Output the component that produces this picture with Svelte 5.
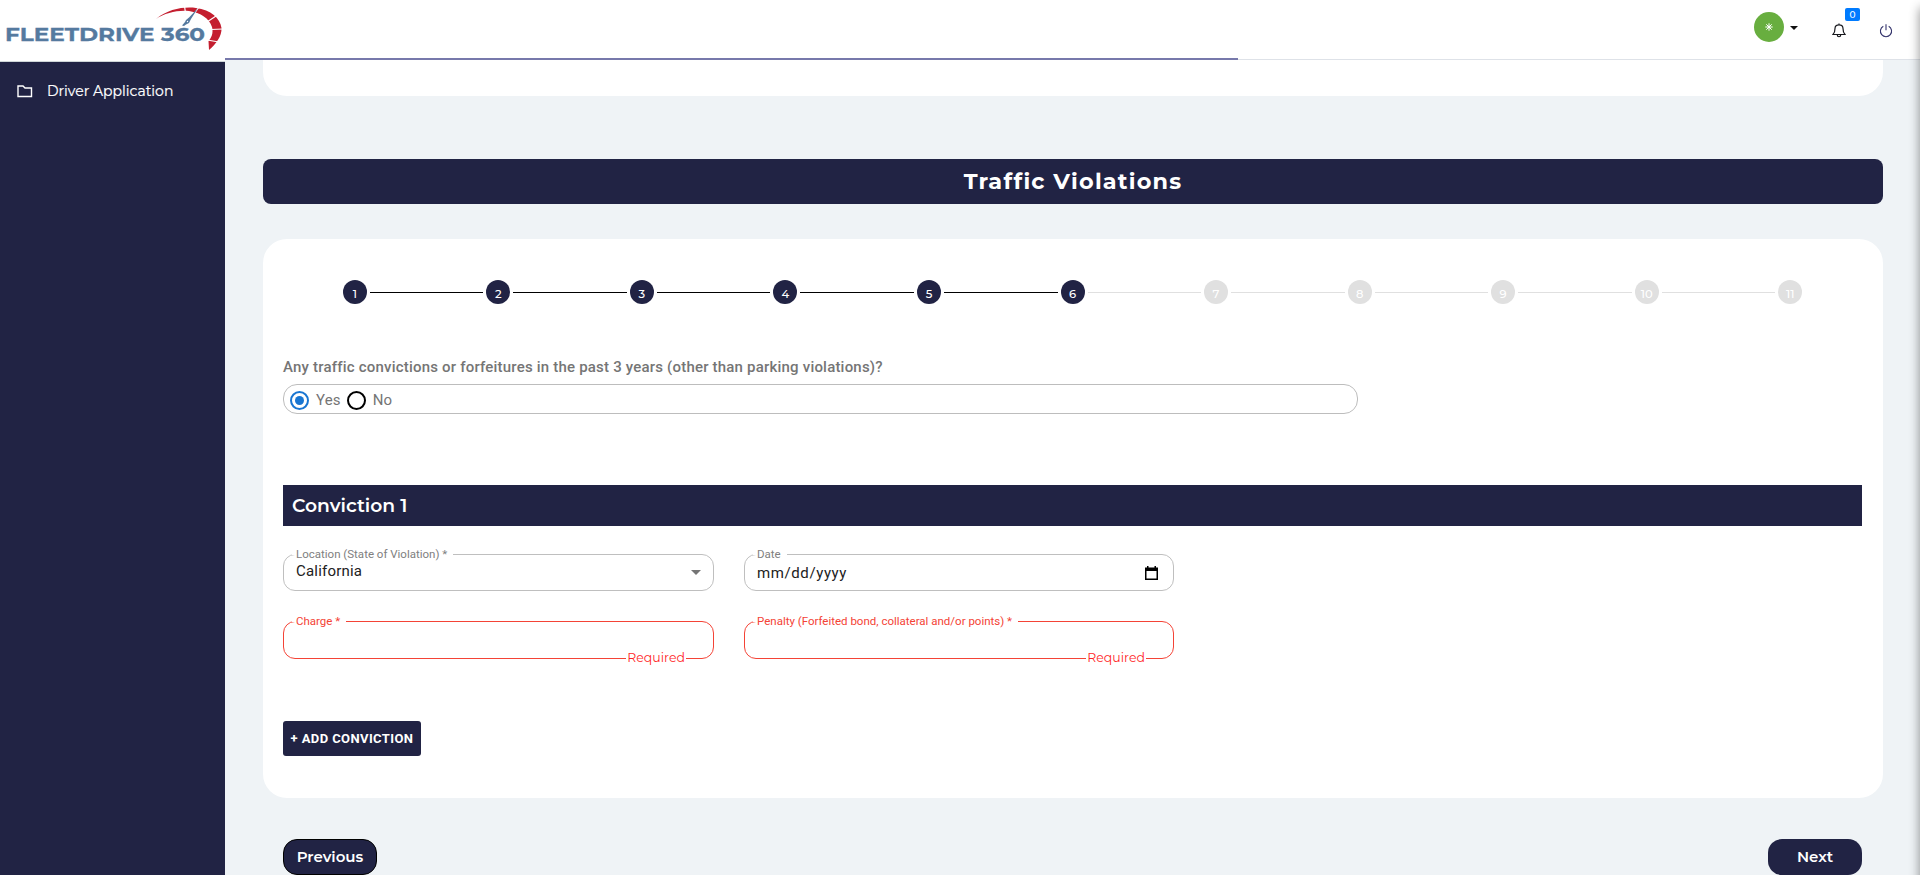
<script>
  const steps = Array.from({ length: 11 }, (_, i) => i + 1);
  const current = 6;
  let answer = $state('Yes');
</script>

<div class="page">
  <aside>
    <div class="brand">
      <svg width="225" height="61" viewBox="0 0 225 61">
        <text x="5" y="41" textLength="200" lengthAdjust="spacingAndGlyphs" class="logo">FLEETDRIVE 360</text>
        <path d="M156 19C168 9 184 6.500 196 8C211 10 220 18 221.500 28C222 36 216 44 209 50L208.500 41C213 36 213 31 212 27C209 18 201 13 189 11C177 10 165 13 156 19Z" fill="#c41e2f" />
        <path d="M184.500 6L185.500 13M199 7L194 14M216 16L207 22M223 29L211 29.500M219 42L207 40" stroke="#fff" stroke-width="1.200" />
        <path d="M198 8L191 19L189 23L186 24.500L184 26L182 25.500L185 22L186 20L189 17.500Z" fill="#557a9f" />
        <circle cx="187.500" cy="21.500" r=".7" fill="#fff" />
      </svg>
    </div>
    <nav>
      <svg width="16" height="13" viewBox="0 0 16 13" fill="none" stroke="#fff" stroke-width="1.400"><path d="M1 11.500V1H6L8 3H14.500V11.500Z" /></svg>
      <span class="navtext">Driver Application</span>
    </nav>
  </aside>

  <div class="body">
    <header>
      <div class="avatar"><svg width="8" height="8" viewBox="0 0 8 8" stroke="#fff" stroke-width="1"><path d="M4 .3V7.700M.3 4H7.700M1.300 1.300L6.700 6.700M6.700 1.300L1.300 6.700" /></svg></div>
      <span class="caret"></span>
      <div class="bell">
        <svg width="14" height="15" viewBox="0 0 14 15" fill="none" stroke="#16171c" stroke-width="1.200"><path d="M1 11.500C2.500 10 3 9 3 5.500C3 3 4.500 1.800 7 1.800S11 3 11 5.500C11 9 11.500 10 13 11.500ZM5.300 12C5.300 14.300 8.700 14.300 8.700 12M7 .4V1.800" /></svg>
        <span class="badge">0</span>
      </div>
      <svg class="power" width="14" height="14" viewBox="0 0 14 14" fill="none" stroke="#35356d" stroke-width="1.100"><path d="M4.300 2.200A5.600 5.600 0 1 0 9.700 2.200M7 .2V6.200" /></svg>
      <div class="progress"></div>
    </header>

    <main>
      <div class="prev-card"></div>
      <h1><span>Traffic Violations</span></h1>
      <section class="card">
        <div class="stepper">
          {#each steps as n}
            <div class="step" class:done={n <= current}>
              <i class:hidden={n === 1}></i>
              <b><span>{n}</span></b>
              <i class:hidden={n === 11} class:off={n >= current}></i>
            </div>
          {/each}
        </div>

        <p class="question">Any traffic convictions or forfeitures in the past 3 years (other than parking violations)?</p>
        <div class="choices">
          {#each ['Yes', 'No'] as option}
            <button class="choice" onclick={() => (answer = option)}>
              <span class="radio" class:on={answer === option}></span>{option}
            </button>
          {/each}
        </div>

        <h2>Conviction 1</h2>

        <div class="fields">
          <fieldset>
            <legend><span>Location (State of Violation) *</span></legend>
            <div class="value"><span class="state">California</span><span class="arrow"></span></div>
          </fieldset>
          <fieldset>
            <legend><span>Date</span></legend>
            <div class="value"><span class="date">mm/dd/yyyy</span>
              <svg class="cal" width="13" height="14" viewBox="0 0 13 14"><path d="M0 1.500H2V0H3.500V1.500H9.500V0H11V1.500H13V14H0ZM1.500 5V12.500H11.500V5Z" fill="#000" fill-rule="evenodd" /></svg>
            </div>
          </fieldset>
          <fieldset class="error">
            <legend><span>Charge *</span></legend>
            <span class="required">Required</span>
          </fieldset>
          <fieldset class="error">
            <legend><span>Penalty (Forfeited bond, collateral and/or points) *</span></legend>
            <span class="required">Required</span>
          </fieldset>
        </div>

        <button class="add">+ ADD CONVICTION</button>
      </section>

      <div class="actions">
        <button class="outlined">Previous</button>
        <button>Next</button>
      </div>
    </main>
  </div>
  <div class="edge"></div>
</div>

<style>
  :global(body) { margin: 0; overflow: hidden; }
  * { box-sizing: border-box; }
  .page {
    --navy: #212344;
    --display: Montserrat, Inter, sans-serif;
    display: flex; width: 1920px; height: 875px; overflow: hidden; position: relative;
    background: #eff3f6; font-family: Roboto, sans-serif;
  }
  button { border: 0; padding: 0; background: none; font: inherit; color: inherit; }
  aside { width: 225px; background: var(--navy); flex: none; }
  .brand { height: 62px; background: #fff; border-bottom: 1px solid #cfd6d8; }
  .brand svg { display: block; }
  .logo { font: 700 17.500px Montserrat, Inter, sans-serif; fill: #557a9f; stroke: #557a9f; stroke-width: .3; }
  nav { display: flex; align-items: flex-start; padding: 20px 0 0 17px; height: 78px; color: #fff; }
  nav svg { margin-top: 3px; }
  .navtext { margin-left: 14px; font: 400 14px/18px var(--display); white-space: nowrap; -webkit-text-stroke: .2px #fff; }

  .body { flex: 1; display: flex; flex-direction: column; min-width: 0; }
  header { height: 60px; flex: none; background: #fff; border-bottom: 1px solid #dee2e8; position: relative; display: flex; align-items: flex-start; padding-left: 1529px; }
  .avatar { width: 30px; height: 30px; border-radius: 50%; background: #68ae3f; margin-top: 12px; display: grid; place-items: center; }
  .caret { margin: 26px 0 0 6px; border: 4px solid transparent; border-top-color: #111; border-bottom: 0; }
  .bell { position: relative; margin: 23px 0 0 34px; width: 14px; height: 15px; }
  .bell svg { display: block; }
  .badge { position: absolute; left: 13px; top: -15px; width: 15px; height: 13px; border-radius: 2px; background: #007bff; color: #fff; font: 500 9px/13px var(--display); text-align: center; }
  .power { margin: 24px 0 0 33px; }
  .progress { position: absolute; left: 0; bottom: -1px; width: 1013px; height: 2px; background: #7779ab; }

  main { padding: 0 37px 0 38px; display: flex; flex-direction: column; }
  .prev-card { height: 36px; background: #fff; border-radius: 0 0 24px 24px; }
  h1 { margin: 63px 0 35px; height: 45px; border-radius: 8px; background: var(--navy); color: #fff; text-align: center; font: 700 22.400px/45px var(--display); letter-spacing: 1.200px; }
  .card { height: 559px; border-radius: 24px; background: #fff; padding: 41px 21px 0 20px; }
  .stepper { display: flex; height: 24px; }
  .step { flex: 1; display: flex; align-items: center; }
  .step i { flex: 1; height: 1px; margin-top: 1px; background: #e0e0e0; }
  .step i:last-child { margin-left: 3px; }
  .step i:first-child { margin-right: 3px; }
  .step.done i { background: #000; }
  .step.done i.off { background: #e0e0e0; }
  .step .hidden { visibility: hidden; }
  .step b { width: 24px; height: 24px; border-radius: 50%; background: #e0e0e0; color: #fff; font: 500 11.500px/28px var(--display); text-align: center; }
  .step.done b { background: var(--navy); }

  .question { margin: 53px 0 0; color: #757575; font-size: 15px; font-weight: 500; line-height: 20px; letter-spacing: .2px; }
  .choices { margin-top: 7px; width: 1075px; height: 30px; border: 1px solid #bdbdbd; border-radius: 14px; display: flex; align-items: center; padding: 2px 0 0 6px; gap: 6px; }
  .choice { display: flex; align-items: center; gap: 7px; font-size: 15px; line-height: 18px; letter-spacing: .15px; color: #757575; }
  .radio { width: 19px; height: 19px; border: 2px solid #000; border-radius: 50%; display: grid; place-items: center; }
  .radio.on { border-color: #1976d2; }
  .radio.on::after { content: ''; width: 9px; height: 9px; border-radius: 50%; background: #1976d2; }

  h2 { margin: 71px 0 28px; height: 41px; background: var(--navy); color: #fff; padding-left: 9px; font: 600 18.700px/41px var(--display); }
  .fields { display: grid; grid-template-columns: 431px 430px; column-gap: 30px; grid-template-rows: 37px 38px; row-gap: 30px; }
  fieldset { margin: 0; padding: 0; min-width: 0; border: 1px solid #bfbfbf; border-radius: 12px; position: relative; }
  legend { margin-left: 8px; padding: 0 6px 0 4px; height: 1px; line-height: 0; font-size: 11.500px; color: #808080; }
  fieldset.error { border-color: #f44336; }
  .error legend { color: #f44336; }
  .value { height: 35px; display: flex; align-items: center; justify-content: space-between; padding: 0 12px 0 12px; font-size: 15px; color: #212121; letter-spacing: .2px; }
  .state { margin-top: -3px; }
  .arrow { border: 5px solid transparent; border-top-color: #757575; border-bottom: 0; }
  .date { letter-spacing: .6px; }
  .cal { margin-right: 3px; }
  .required { position: absolute; right: 27px; bottom: -7px; background: #fff; height: 15px; color: #ff1f28; font: 400 12.500px/15px var(--display); padding: 0 1px; }

  .add { margin-top: 62px; display: block; width: 138px; height: 35px; border-radius: 3px; background: var(--navy); color: #fff; font-size: 13px; font-weight: 700; letter-spacing: .4px; white-space: nowrap; }
  .actions { display: flex; justify-content: space-between; padding: 41px 21px 0 20px; }
  .actions button { width: 94px; height: 36px; border-radius: 14px; background: var(--navy); color: #fff; font: 600 15px/18px var(--display); }
  .actions .outlined { border: 1px solid #000; }
  .edge { position: absolute; right: -10px; top: 8px; width: 10px; height: 900px; box-shadow: 0 0 11px rgba(0, 0, 0, .45); }
</style>
